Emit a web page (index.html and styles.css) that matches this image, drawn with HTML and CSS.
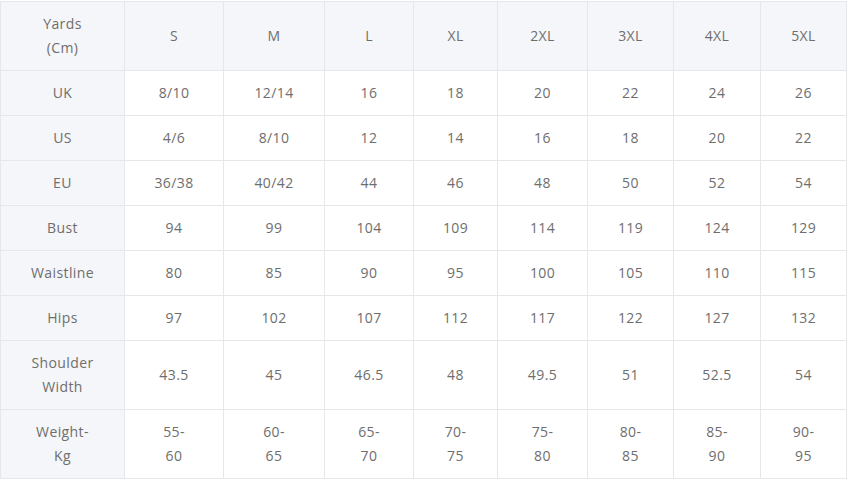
FILE: index.html
```html
<!DOCTYPE html>
<html>
<head>
<meta charset="utf-8">
<link rel="stylesheet" href="styles.css">
</head>
<body>
<div class="wrap">
<table class="size">
<colgroup>
<col class="c0"><col class="c1"><col class="c2"><col class="c3"><col class="c4"><col class="c5"><col class="c6"><col class="c7"><col class="c8">
</colgroup>
<thead>
<tr><th>Yards<br>(Cm)</th><th>S</th><th>M</th><th>L</th><th>XL</th><th>2XL</th><th>3XL</th><th>4XL</th><th>5XL</th></tr>
</thead>
<tbody>
<tr><th>UK</th><td>8/10</td><td>12/14</td><td>16</td><td>18</td><td>20</td><td>22</td><td>24</td><td>26</td></tr>
<tr><th>US</th><td>4/6</td><td>8/10</td><td>12</td><td>14</td><td>16</td><td>18</td><td>20</td><td>22</td></tr>
<tr><th>EU</th><td>36/38</td><td>40/42</td><td>44</td><td>46</td><td>48</td><td>50</td><td>52</td><td>54</td></tr>
<tr><th>Bust</th><td>94</td><td>99</td><td>104</td><td>109</td><td>114</td><td>119</td><td>124</td><td>129</td></tr>
<tr><th>Waistline</th><td>80</td><td>85</td><td>90</td><td>95</td><td>100</td><td>105</td><td>110</td><td>115</td></tr>
<tr><th>Hips</th><td>97</td><td>102</td><td>107</td><td>112</td><td>117</td><td>122</td><td>127</td><td>132</td></tr>
<tr><th>Shoulder<br>Width</th><td>43.5</td><td>45</td><td>46.5</td><td>48</td><td>49.5</td><td>51</td><td>52.5</td><td>54</td></tr>
<tr><th>Weight-<br>Kg</th><td>55-<br>60</td><td>60-<br>65</td><td>65-<br>70</td><td>70-<br>75</td><td>75-<br>80</td><td>80-<br>85</td><td>85-<br>90</td><td>90-<br>95</td></tr>
</tbody>
</table>
</div>
</body>
</html>
```
FILE: styles.css
```css
html, body {
  margin: 0;
  padding: 0;
  background: #ffffff;
}
.wrap {
  padding-top: 1px;
}
.size {
  border-collapse: collapse;
  table-layout: fixed;
  width: 847px;
  font-family: "Open Sans", "Noto Sans", sans-serif;
  font-size: 14px;
  letter-spacing: 0.4px;
  color: #6e6e6e;
}
.c0 { width: 124px; }
.c1 { width: 99px; }
.c2 { width: 101px; }
.c3 { width: 89px; }
.c4 { width: 84px; }
.c5 { width: 90px; }
.c6 { width: 86px; }
.c7 { width: 87px; }
.c8 { width: 86px; }
.size th, .size td {
  border: 1px solid #e6e7ea;
  padding: 10px 2px;
  line-height: 24px;
  text-align: center;
  vertical-align: middle;
  font-weight: 400;
}
.size thead th, .size tbody th {
  background: #f5f6f9;
}
```
